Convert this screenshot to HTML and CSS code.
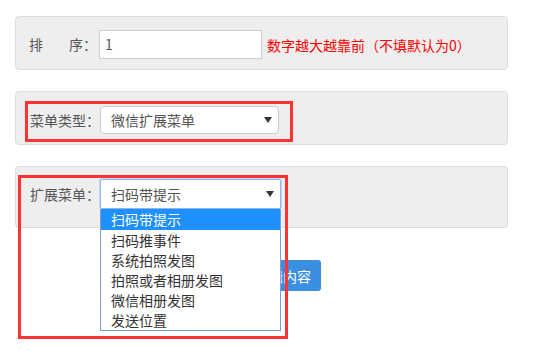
FILE: index.html
```html
<!DOCTYPE html>
<html lang="zh-CN">
<head>
    <meta charset="UTF-8">
    <meta name="viewport" content="width=device-width, initial-scale=1.0">
    <title>菜单设置</title>
    <link rel="stylesheet" href="styles.css">
</head>
<body>
    <div class="page">
        <div class="panel panel-sort">
            <label class="label label-spread"><span>排</span><span>序：</span></label>
            <div class="input">1</div>
            <span class="hint">数字越大越靠前（不填默认为0）</span>
        </div>

        <div class="panel panel-type">
            <div class="mark">
                <label class="label">菜单类型：</label>
                <div class="select">
                    <span>微信扩展菜单</span>
                    <i class="caret"></i>
                </div>
            </div>
        </div>

        <div class="panel panel-ext">
            <label class="label">扩展菜单：</label>
            <div class="select-wrap">
                <div class="select focus">
                    <span>扫码带提示</span>
                    <i class="caret"></i>
                </div>
                <ul class="options">
                    <li class="active">扫码带提示</li>
                    <li>扫码推事件</li>
                    <li>系统拍照发图</li>
                    <li>拍照或者相册发图</li>
                    <li>微信相册发图</li>
                    <li>发送位置</li>
                </ul>
            </div>
            <div class="mark-big"></div>
        </div>

        <div class="actions">
            <button class="btn">编辑内容</button>
        </div>
    </div>
</body>
</html>
```

FILE: styles.css
```css
html {
    background: #fff;
}

body {
    margin: 0;
    min-height: 351px;
    font-family: "Noto Sans CJK SC", "Microsoft YaHei", sans-serif;
    font-size: 14px;
    color: #555;
    background: #fff;
}

.page {
    padding: 16px 25px 60px 15px;
    width: 493px;
}

.panel {
    box-sizing: border-box;
    display: flex;
    align-items: flex-start;
    background: #eee;
    border: 1px solid #ddd;
    border-radius: 4px;
    margin-bottom: 21px;
}

.label {
    width: 70px;
    line-height: 20px;
    white-space: nowrap;
}

.label-spread {
    display: flex;
    justify-content: space-between;
    width: 68px;
    margin-right: 2px;
}

.panel-sort {
    height: 54px;
    padding: 13px 0 0 13px;
}

.panel-sort .label {
    margin-top: 4px;
}

.input {
    box-sizing: border-box;
    width: 163px;
    height: 29px;
    border: 1px solid #ccc;
    background: #fff;
    padding: 0 5px;
    line-height: 27px;
    color: #555;
}

.hint {
    margin: 5px 0 0 5px;
    color: #f00;
    line-height: 20px;
}

.panel-type {
    height: 54px;
    padding: 9px 0 0 9px;
}

.mark {
    display: flex;
    align-items: center;
    border: 3px solid #f33;
    padding: 2px 11px 5px 2px;
}

.select {
    box-sizing: border-box;
    display: flex;
    align-items: center;
    justify-content: space-between;
    width: 179px;
    height: 28px;
    padding: 0 6px 0 10px;
    background: #fff;
    border: 1px solid #ccc;
    border-radius: 4px;
    color: #555;
}

.caret {
    width: 0;
    height: 0;
    border-top: 6px solid #333;
    border-left: 4px solid transparent;
    border-right: 4px solid transparent;
}

.panel-ext {
    position: relative;
    height: 62px;
    padding: 12px 0 0 14px;
}

.panel-ext .label {
    margin-top: 5px;
}

.select-wrap {
    position: relative;
}

.select.focus {
    width: 181px;
    height: 30px;
    border: 1px solid #8fb5ea;
    border-radius: 2px;
    box-shadow: 0 0 0 1px #c5d9f5;
}

.options {
    position: absolute;
    left: 0;
    top: 30px;
    z-index: 2;
    box-sizing: border-box;
    width: 181px;
    margin: 0;
    padding: 0;
    list-style: none;
    background: #fff;
    border: 1px solid #7a9ed6;
    border-top: 0;
    color: #333;
}

.options li {
    height: 20px;
    line-height: 20px;
    padding-left: 10px;
}

.options li.active {
    height: 21px;
    background: #1e90ff;
    color: #fff;
}

.mark-big {
    position: absolute;
    left: 2px;
    top: 8px;
    z-index: 3;
    width: 264px;
    height: 158px;
    border: 3px solid #f33;
    pointer-events: none;
}

.actions {
    padding: 11px 0 0 230px;
}

.btn {
    height: 31px;
    padding: 0 10px;
    border: 0;
    border-radius: 3px;
    background: #3a8fe0;
    color: #fff;
    font-family: inherit;
    font-size: 14px;
}
```
